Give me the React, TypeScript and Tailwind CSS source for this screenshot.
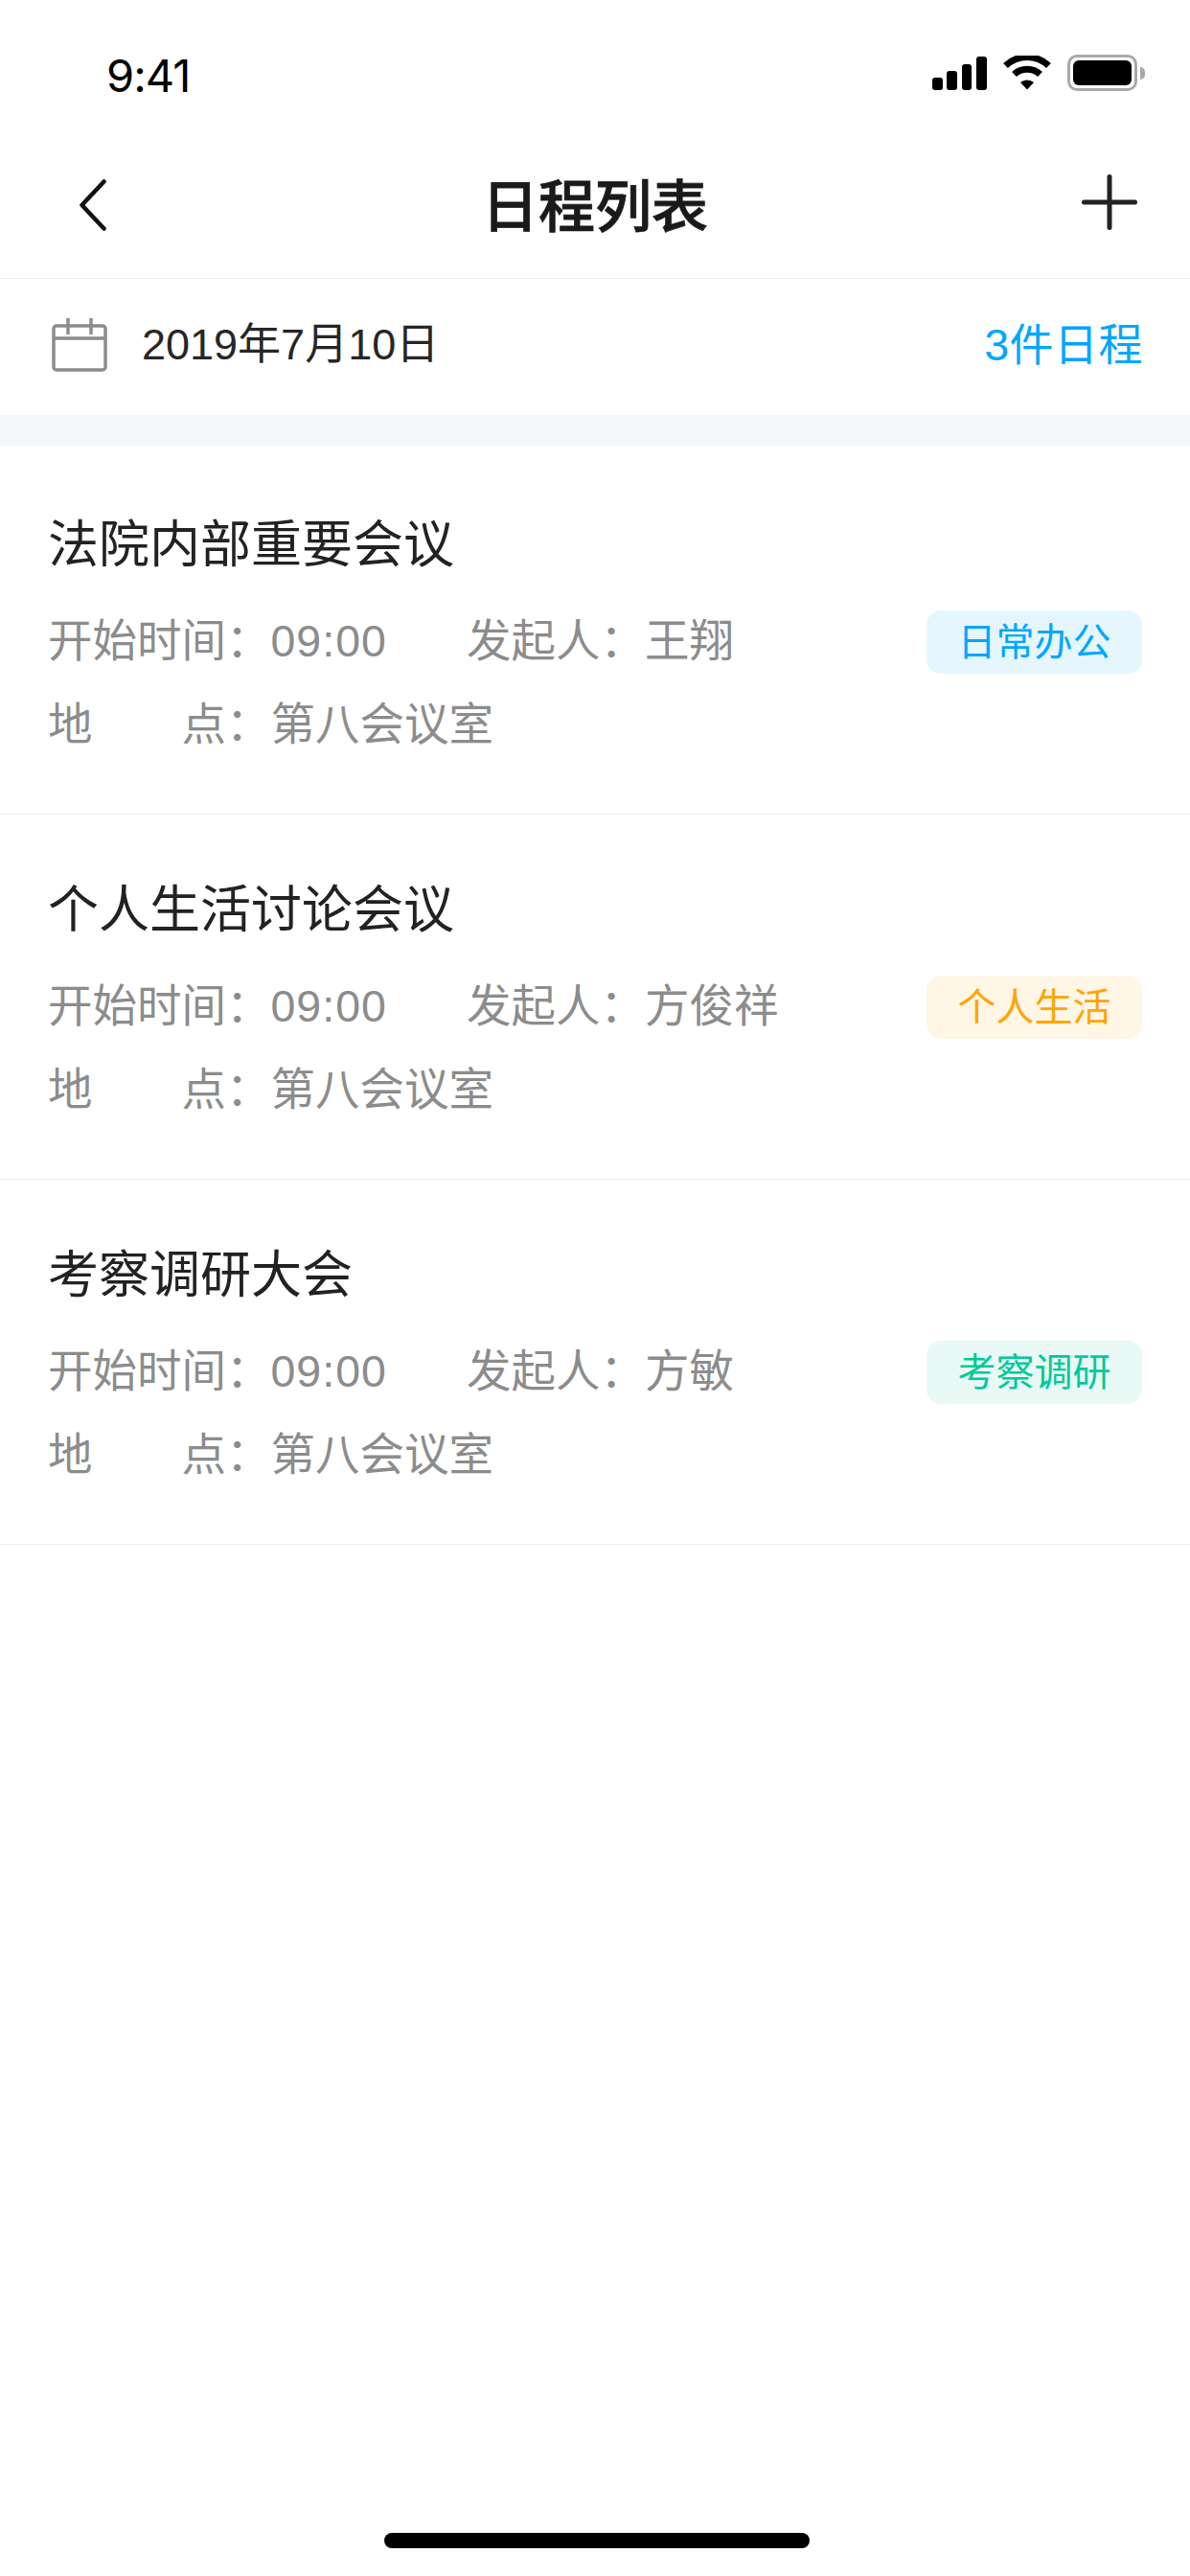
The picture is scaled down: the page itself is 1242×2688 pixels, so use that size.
const font = "font-['Liberation_Sans','Noto_Sans_CJK_SC',sans-serif]";

type Schedule = {
  title: string;
  owner: string;
  tag: string;
  tagClass: string;
};

const schedules: Schedule[] = [
  { title: "法院内部重要会议", owner: "王翔", tag: "日常办公", tagClass: "bg-[#e5f6ff] text-[#00a6ff]" },
  { title: "个人生活讨论会议", owner: "方俊祥", tag: "个人生活", tagClass: "bg-[#fff6e6] text-[#ffa500]" },
  { title: "考察调研大会", owner: "方敏", tag: "考察调研", tagClass: "bg-[#e9faf6] text-[#00c99a]" },
];

function StatusBar() {
  return (
    <div className="flex h-[132px] items-start justify-between pl-[111px] pr-[47px] pt-[50px]">
      <span className="font-['Inter',sans-serif] text-[47px] leading-[58px] tracking-[-1px] text-black">9:41</span>
      <div className="flex items-center gap-[17px] pt-[7px]">
        <svg width="57" height="35" viewBox="0 0 57 35" fill="#000">
          <rect x="0" y="22" width="11" height="13" rx="3" />
          <rect x="15" y="15" width="11" height="20" rx="3" />
          <rect x="31" y="8" width="10" height="27" rx="3" />
          <rect x="46" y="0" width="11" height="35" rx="3" />
        </svg>
        <svg width="50" height="36" viewBox="0 0 50 36" fill="none" stroke="#000">
          <path d="M2.5 10.5C15.5 -1.5 34.5 -1.5 47.5 10.5" strokeWidth="7" />
          <path d="M11.5 19.5C19 12.5 31 12.5 38.5 19.5" strokeWidth="7" />
          <path d="M18 28L25 35.5L32 28C28 24.5 22 24.5 18 28Z" fill="#000" stroke="none" />
        </svg>
        <div className="flex items-center gap-[3px]">
          <div className="flex h-[38px] w-[73px] rounded-[10px] border-[3px] border-[#a9a9a9] p-[3px]">
            <div className="flex-1 rounded-[6px] bg-black" />
          </div>
          <div className="h-[13px] w-[5px] rounded-r-full bg-[#a9a9a9]" />
        </div>
      </div>
    </div>
  );
}

function NavBar() {
  return (
    <div className="flex h-[159px] items-center justify-between border-b border-[#eeeeee] pl-[83px] pr-[55px]">
      <svg width="28" height="54" viewBox="0 0 28 54" fill="none" stroke="#111" strokeWidth="4.5" strokeLinecap="round" strokeLinejoin="round" className="mt-[6px]">
        <path d="M25.5 2.5L2.5 27L25.5 51.5" />
      </svg>
      <span className="ml-[2px] mt-[12px] text-[59px] font-medium leading-[80px] text-[#1a1a1a] [-webkit-text-stroke:0.8px_#1a1a1a]">日程列表</span>
      <svg width="58" height="58" viewBox="0 0 58 58" fill="none" stroke="#222" strokeWidth="5" strokeLinecap="round">
        <path d="M29 2.5V55.5M2.5 29H55.5" />
      </svg>
    </div>
  );
}

function DateBar() {
  return (
    <div className="flex h-[142px] items-center justify-between pb-[4px] pl-[54px] pr-[49px]">
      <div className="flex items-center gap-[36px]">
        <svg width="58" height="56" viewBox="0 0 58 56" fill="none" stroke="#8c8c8c" strokeWidth="3.5" strokeLinejoin="round">
          <rect x="2" y="8" width="54" height="46" rx="3" />
          <path d="M2 21H56M17 0V17M41 0V17" />
        </svg>
        <span className="text-[45px] leading-[60px] text-[#262626]">2019年7月10日</span>
      </div>
      <span className="text-[46px] leading-[60px] tracking-[0.5px] text-[#00a6ff]">3件日程</span>
    </div>
  );
}

function ScheduleItem({ item }: { item: Schedule }) {
  return (
    <div className="h-[381px] border-b border-[#eeeeee] px-[50px] pt-[65px]">
      <div className="text-[53px] leading-[70px] text-[#222222]">{item.title}</div>
      <div className="mt-[33px] flex h-[66px] items-center justify-between text-[46.5px] text-[#8c8c8c]">
        <div className="flex">
          <span className="w-[437px]">
            开始时间：<span className="tracking-[1px]">09:00</span>
          </span>
          <span>发起人：{item.owner}</span>
        </div>
        <span className={`flex h-[66px] w-[225px] items-center justify-center rounded-[15px] text-[40px] ${item.tagClass}`}>
          {item.tag}
        </span>
      </div>
      <div className="mt-[24px] flex h-[60px] items-center text-[46.5px] text-[#8c8c8c]">
        <span className="flex w-[186px] justify-between">
          <span>地</span>
          <span>点</span>
        </span>
        <span>：第八会议室</span>
      </div>
    </div>
  );
}

export default function App() {
  return (
    <div className={`flex h-[2688px] w-[1242px] flex-col bg-white ${font}`}>
      <StatusBar />
      <NavBar />
      <DateBar />
      <div className="mb-[3px] h-[33px] bg-[#f5f6f8]" />
      {schedules.map((item) => (
        <ScheduleItem key={item.title} item={item} />
      ))}
      <div className="mt-auto flex justify-center pb-[29px] pl-[4px]">
        <div className="h-[16px] w-[444px] rounded-full bg-black" />
      </div>
    </div>
  );
}
